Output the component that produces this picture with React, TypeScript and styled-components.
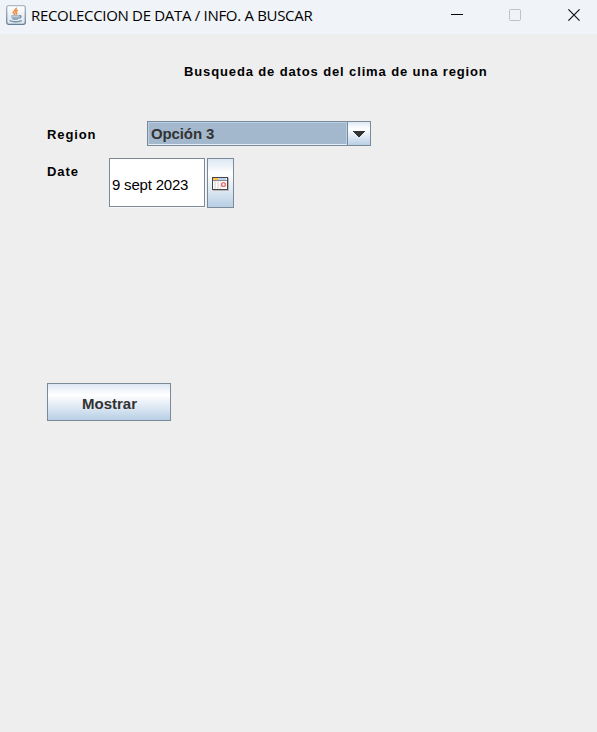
import React from "react";
import styled, { createGlobalStyle } from "styled-components";

const GlobalStyle = createGlobalStyle`
  * { box-sizing: border-box; }
  body { margin: 0; background: #eeeeee; }
`;

const Window = styled.div`
  width: 597px;
  height: 732px;
  display: flex;
  flex-direction: column;
  background: #eeeeee;
  overflow: hidden;
  font-family: "Liberation Sans", Arial, sans-serif;
`;

const TitleBar = styled.header`
  height: 34px;
  flex: none;
  display: flex;
  align-items: flex-start;
  padding-left: 6px;
  background: #f0f3f8;
`;

const AppIcon = styled.svg`
  display: block;
  flex: none;
  margin-top: 5px;
`;

const Title = styled.h1`
  flex: 1;
  margin: 0 0 0 5px;
  font: 400 15px/30px "Open Sans", "Noto Sans", sans-serif;
  letter-spacing: -0.31px;
  white-space: nowrap;
  color: #000;
`;

const WindowControls = styled.div`
  display: flex;
  gap: 46px;
  padding: 9px 17px 0 0;
`;

const ControlIcon = styled.svg`
  display: block;
  width: 12px;
  height: 12px;

  &:last-child {
    margin-left: 1px;
  }
`;

const Content = styled.main`
  flex: 1;
  display: flex;
  flex-direction: column;
  align-items: flex-start;
  padding: 30px 0 0 47px;
`;

const Heading = styled.h2`
  margin: 0 0 41px 137px;
  font-size: 13px;
  line-height: 16px;
  font-weight: 700;
  letter-spacing: 0.87px;
  white-space: nowrap;
  color: #000;
`;

const Row = styled.div<{ $height: number; $gap: number }>`
  display: flex;
  height: ${(p) => p.$height}px;
  margin-bottom: ${(p) => p.$gap}px;
`;

const Label = styled.label<{ $width: number; $line: number }>`
  width: ${(p) => p.$width}px;
  font-size: 13px;
  font-weight: 700;
  line-height: ${(p) => p.$line}px;
  letter-spacing: 0.9px;
  color: #000;
`;

const Combo = styled.div`
  display: flex;
  width: 224px;
  height: 25px;
  border: 1px solid #7a8a99;
`;

const ComboValue = styled.div`
  flex: 1;
  padding-left: 2px;
  border: 1px solid #b8cfe5;
  border-bottom-color: #e4eef8;
  background: #a3b8cc;
  color: #333;
  font-size: 15px;
  font-weight: 700;
  line-height: 22px;
  letter-spacing: -0.12px;
`;

const ComboArrow = styled.div`
  width: 23px;
  display: flex;
  align-items: center;
  justify-content: center;
  border-left: 1px solid #7a8a99;
  background: linear-gradient(#dde8f3, #ffffff 30%, #dde8f3 65%, #b8cfe5);
`;

const DateField = styled.div`
  width: 96px;
  height: 49px;
  padding-left: 2px;
  border: 1px solid #7a8a99;
  background: #fff;
  box-shadow: 1px 1px 0 #f8f8f8;
  color: #000;
  font-size: 15px;
  line-height: 51px;
  letter-spacing: -0.2px;
  white-space: nowrap;
`;

const MetalButton = styled.button<{ $width: number; $height: number }>`
  width: ${(p) => p.$width}px;
  height: ${(p) => p.$height}px;
  display: flex;
  align-items: center;
  justify-content: center;
  padding: 3px 0 0 1px;
  border: 1px solid #7a8a99;
  border-radius: 0;
  background: linear-gradient(#dde8f3, #ffffff 30%, #dde8f3 65%, #b8cfe5);
  color: #333;
  font: 700 15px "Liberation Sans", Arial, sans-serif;
`;

const CalendarButton = styled(MetalButton)`
  margin-left: 2px;
  padding: 2px 0 0;
`;

const JavaIcon = () => (
  <AppIcon width="20" height="20" viewBox="0 0 20 20">
    <defs>
      <linearGradient id="tile" x1="0" y1="0" x2="0" y2="1">
        <stop offset="0" stopColor="#fff" />
        <stop offset="1" stopColor="#dce3e9" />
      </linearGradient>
      <linearGradient id="rim" x1="0" y1="0" x2="0" y2="1">
        <stop offset="0" stopColor="#a9b9c7" />
        <stop offset="1" stopColor="#647f9a" />
      </linearGradient>
    </defs>
    <rect x=".7" y=".7" width="18.6" height="18.6" rx="2" fill="url(#tile)" stroke="url(#rim)" strokeWidth="1.3" />
    <path d="M10 2.8c1.2 1.9-3 2.9-2.6 4.9.1 1 1.4 1.4 2 2M11.8 5.2c-2.4 1-2.3 1.8-1.4 2.7.6.7.3 1.2-.2 1.7" fill="none" stroke="#ee944f" strokeWidth="1.8" />
    <path d="M5.2 10.2h7.9c0 3-1 4.4-2.1 4.8H7.8C6.3 14.3 5.2 13 5.2 10.2z" fill="#91a9be" />
    <path d="M6 11.8h6.4" stroke="#dbe4eb" strokeWidth=".8" />
    <path d="M13 10.9c3-.8 2.7 2-.5 2.5M3.9 15.3c.8 1.9 10.4 1.9 11.6 0" fill="none" stroke="#7390aa" strokeWidth="1.3" />
  </AppIcon>
);

const CalendarIcon = () => (
  <svg width="17" height="15" viewBox="0 0 17 15">
    <path d="M1 13.5h15.5V1" fill="none" stroke="#b9b6b5" />
    <rect width="16" height="13" fill="#454343" />
    <rect x="1" y="1" width="5" height="2" fill="#ffc34d" />
    <rect x="6" y="1" width="3" height="2" fill="#c9d2dc" />
    <rect x="9" y="1" width="5" height="2" fill="#b5d0fa" />
    <rect x="14" y="1" width="1" height="2" fill="#f5f8fc" />
    <rect x="1" y="3" width="14" height="1" fill="#8d8b8b" />
    <rect x="1" y="4" width="14" height="8" fill="#fff" />
    <path d="M2 4h2v8H2zM5 4h2v8H5zM8 4h1v8H8z" fill="#e8e4e4" />
    <circle cx="11.5" cy="7.5" r="1.9" fill="#fff" stroke="#ea6a6a" strokeWidth="1.4" />
  </svg>
);

export default function App() {
  return (
    <Window>
      <GlobalStyle />
      <TitleBar>
        <JavaIcon />
        <Title>RECOLECCION DE DATA / INFO. A BUSCAR</Title>
        <WindowControls>
          <ControlIcon viewBox="0 0 12 12">
            <path d="M0 5.5h12" stroke="#000" />
          </ControlIcon>
          <ControlIcon viewBox="0 0 12 12">
            <rect x=".5" y=".5" width="11" height="11" rx="1" fill="none" stroke="#bfc1c4" />
          </ControlIcon>
          <ControlIcon viewBox="0 0 12 12">
            <path d="M.4.4l11.2 11.2M11.6.4L.4 11.6" stroke="#111" strokeWidth="1.2" />
          </ControlIcon>
        </WindowControls>
      </TitleBar>
      <Content>
        <Heading>Busqueda de datos del clima de una region</Heading>
        <Row $height={25} $gap={12}>
          <Label $width={100} $line={27}>Region</Label>
          <Combo>
            <ComboValue>Opción 3</ComboValue>
            <ComboArrow>
              <svg width="12" height="6" viewBox="0 0 12 6" shapeRendering="crispEdges">
                <path d="M0 0h12v1h-1v1h-1v1h-1v1h-1v1h-1v1h-2v-1h-1v-1h-1v-1h-1v-1h-1v-1h-1z" fill="#333" />
              </svg>
            </ComboArrow>
          </Combo>
        </Row>
        <Row $height={50} $gap={175}>
          <Label $width={62} $line={27}>Date</Label>
          <DateField>9 sept 2023</DateField>
          <CalendarButton $width={27} $height={50} aria-label="Calendar">
            <CalendarIcon />
          </CalendarButton>
        </Row>
        <MetalButton $width={124} $height={38}>Mostrar</MetalButton>
      </Content>
    </Window>
  );
}
